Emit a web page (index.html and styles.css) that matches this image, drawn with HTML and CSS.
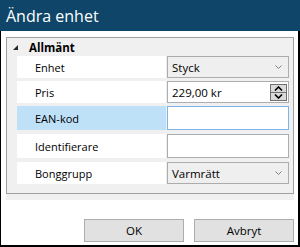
FILE: index.html
```html
<!DOCTYPE html>
<html lang="sv">
<head>
    <meta charset="UTF-8">
    <title>Ändra enhet</title>
    <link rel="stylesheet" href="styles.css">
</head>
<body>
    <div class="window">
        <div class="titlebar">Ändra enhet</div>

        <div class="grid">
            <div class="category">
                <span class="expander"></span>
                <span class="categoryName">Allmänt</span>
            </div>

            <div class="prop">
                <div class="label">Enhet</div>
                <div class="combo">
                    <span>Styck</span>
                    <svg class="chevron" width="7" height="4" viewBox="0 0 7 4"><path d="M0.5 0.5 L3.5 3.5 L6.5 0.5" fill="none" stroke="#808080" stroke-width="1"/></svg>
                </div>
            </div>

            <div class="prop">
                <div class="label">Pris</div>
                <div class="textbox">
                    <span>229,00 kr</span>
                    <div class="spinner">
                        <div class="spinBtn"><svg width="9" height="5" viewBox="0 0 9 5"><path d="M1 4.5 L4.5 1 L8 4.5" fill="none" stroke="#000" stroke-width="1.6"/></svg></div>
                        <div class="spinBtn"><svg width="9" height="5" viewBox="0 0 9 5"><path d="M1 0.5 L4.5 4 L8 0.5" fill="none" stroke="#000" stroke-width="1.6"/></svg></div>
                    </div>
                </div>
            </div>

            <div class="prop tall selected">
                <div class="label">EAN-kod</div>
                <div class="textbox focused"></div>
            </div>

            <div class="prop tall">
                <div class="label">Identifierare</div>
                <div class="textbox"></div>
            </div>

            <div class="prop">
                <div class="label">Bonggrupp</div>
                <div class="combo">
                    <span>Varmrätt</span>
                    <svg class="chevron" width="7" height="4" viewBox="0 0 7 4"><path d="M0.5 0.5 L3.5 3.5 L6.5 0.5" fill="none" stroke="#808080" stroke-width="1"/></svg>
                </div>
            </div>
        </div>
        <div class="description"></div>

        <div class="buttonContainer">
            <button class="dlgBtn">OK</button>
            <button class="dlgBtn">Avbryt</button>
        </div>
    </div>
</body>
</html>
```

FILE: styles.css
```css
body {
    margin: 0;
    padding: 0;
    font-family: "Open Sans", "Noto Sans", sans-serif;
    font-size: 11px;
    color: #000000;
    background-color: #ffffff;
}

.window {
    width: 300px;
    height: 247px;
    box-sizing: border-box;
    border: 1px solid #000000;
    border-top: none;
    border-right-width: 2px;
    border-bottom-width: 2px;
    background-color: #ffffff;
}

.titlebar {
    height: 31px;
    margin: 0 -2px 0 -1px;
    padding-left: 6px;
    background-color: #0e4568;
    color: #ffffff;
    font-size: 16px;
    line-height: 32px;
}

.grid {
    margin: 6px 4px 0 5px;
    height: 155px;
    border: 1px solid #a0a0a0;
    background-color: #f0f0f0;
}

.category {
    display: flex;
    align-items: center;
    height: 18px;
}

.expander {
    width: 0;
    height: 0;
    margin-left: 6px;
    border-left: 5px solid transparent;
    border-bottom: 5px solid #262626;
}

.categoryName {
    margin-left: 11px;
    font-weight: bold;
    font-size: 11.5px;
}

.prop {
    display: flex;
    height: 22px;
    margin-bottom: 3px;
}

.prop.tall {
    height: 24px;
    margin-bottom: 4px;
}

.label {
    width: 149px;
    margin-left: 10px;
    margin-right: 1px;
    padding-left: 18px;
    box-sizing: border-box;
    background-color: #ffffff;
    display: flex;
    align-items: center;
}

.prop.selected .label {
    background-color: #bfe1f8;
}

.combo,
.textbox {
    width: 122px;
    box-sizing: border-box;
    display: flex;
    align-items: center;
    padding-left: 4px;
    font-size: 11.5px;
}

.combo {
    border: 1px solid #acacac;
    background-color: #efefef;
    justify-content: space-between;
    padding-right: 6px;
}

.textbox {
    border: 1px solid #abadb3;
    background-color: #ffffff;
    padding-right: 1px;
    justify-content: space-between;
}

.textbox.focused {
    border-color: #7eb4ea;
}

.spinner {
    width: 17px;
    height: 17px;
    border: 1px solid #707070;
    box-sizing: border-box;
    display: flex;
    flex-direction: column;
}

.spinBtn {
    flex: 1;
    background-color: #dadada;
    display: flex;
    align-items: center;
    justify-content: center;
}

.spinBtn + .spinBtn {
    border-top: 1px solid #707070;
}

.description {
    margin: 0 4px 0 5px;
    height: 6px;
    background-color: #f0f0f0;
}

.buttonContainer {
    display: flex;
    justify-content: flex-end;
    gap: 10px;
    margin-top: 19px;
    padding-right: 4px;
}

.dlgBtn {
    width: 100px;
    height: 23px;
    border: 1px solid #adadad;
    background-color: #e1e1e1;
    font-family: "Open Sans", "Noto Sans", sans-serif;
    font-size: 11.5px;
    color: #000000;
    padding: 0;
}
```
